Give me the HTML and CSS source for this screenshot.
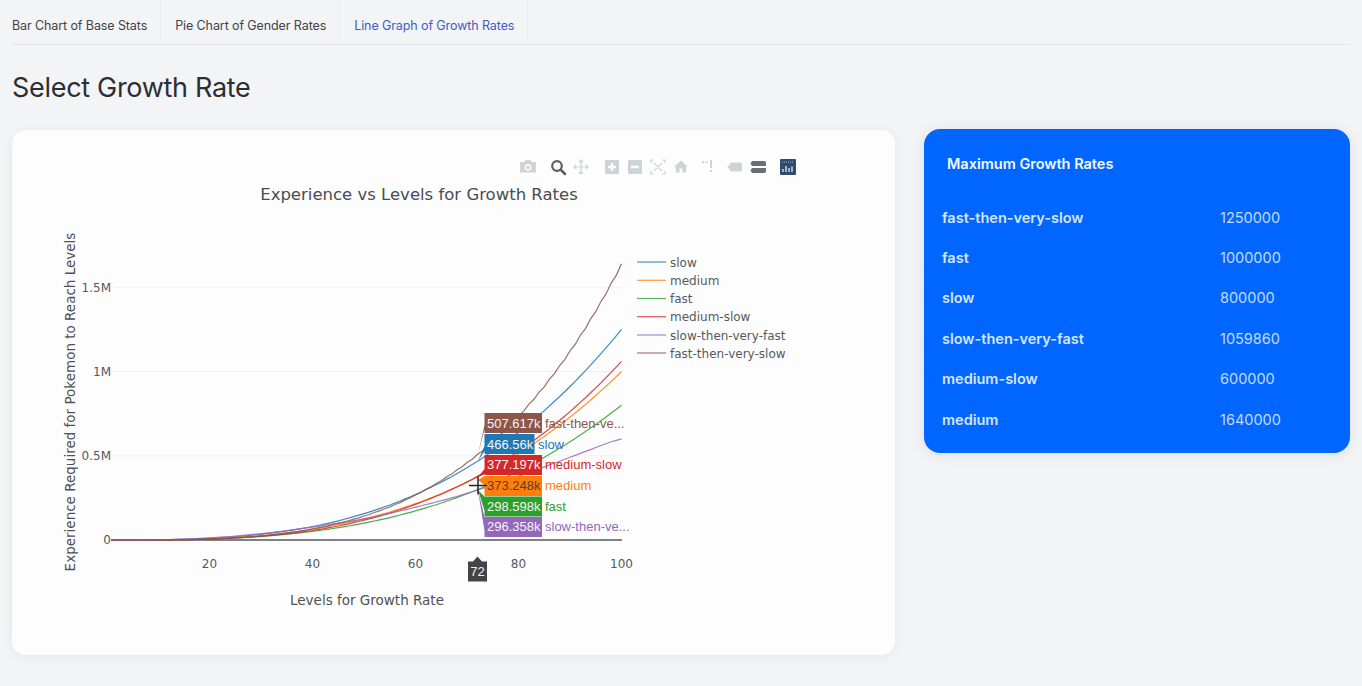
FILE: index.html
```html
<!DOCTYPE html>
<html lang="en">

<head>
  <meta charset="UTF-8" />
  <meta name="viewport" content="width=device-width, initial-scale=1.0" />
  <title>Growth Rates</title>
  <link rel="stylesheet" href="styles.css">
</head>

<body>
  <nav class="tabs">
    <a class="tab">Bar Chart of Base Stats</a>
    <a class="tab">Pie Chart of Gender Rates</a>
    <a class="tab active">Line Graph of Growth Rates</a>
  </nav>

  <h1 class="page-title">Select Growth Rate</h1>

  <main class="content">
    <section class="chart-card">
      <svg class="chart" viewBox="12 130 883 525" width="883" height="525">
        <!-- modebar -->
        <g class="modebar">
          <path class="mb-light" transform="translate(528 167)" d="M-8 -5h4l1.500 -2h5l1.500 2h4v10.500h-16zM0 -3a3.500 3.500 0 1 0 .01 0zM0 -1.300a1.800 1.800 0 1 1 -.01 0z" fill-rule="evenodd" />
          <g transform="translate(558 167)">
            <circle class="mb-ring-dark" cx="-1" cy="-1" r="4.800" />
            <path class="mb-stroke-dark" d="M3 3l4 4" />
          </g>
          <path class="mb-thin" transform="translate(581 167)" d="M0 -7v14M-7 0h14M-2 -5l2 -2 2 2M-2 5l2 2 2 -2M-5 -2l-2 2 2 2M5 -2l2 2 -2 2" />
          <path class="mb-light" transform="translate(612 167)" fill-rule="evenodd" d="M-6 -7h12a1 1 0 0 1 1 1v12a1 1 0 0 1 -1 1h-12a1 1 0 0 1 -1 -1v-12a1 1 0 0 1 1 -1zM-1.200 -4v2.800h-2.800v2.400h2.800v2.800h2.400v-2.800h2.800v-2.400h-2.800v-2.800z" />
          <path class="mb-light" transform="translate(635 167)" fill-rule="evenodd" d="M-6 -7h12a1 1 0 0 1 1 1v12a1 1 0 0 1 -1 1h-12a1 1 0 0 1 -1 -1v-12a1 1 0 0 1 1 -1zM-4 -1.200v2.400h8v-2.400z" />
          <path class="mb-thin" transform="translate(658 167)" d="M-7 -4v-3h3M4 -7h3v3M7 4v3h-3M-4 7h-3v-3M-4 -4l8 8M4 -4l-8 8" />
          <path class="mb-light" transform="translate(681 167)" d="M0 -6.500l7 6.500h-2v5.500h-3.500v-4h-3v4h-3.500v-5.500h-2z" />
          <g class="mb-light" transform="translate(709 167)">
            <rect x="1" y="-7" width="2" height="8" />
            <rect x="1" y="3" width="2" height="2" />
            <rect x="-7" y="-6" width="2" height="2" />
            <rect x="-3.500" y="-6" width="2" height="2" />
          </g>
          <path class="mb-light" transform="translate(735 167)" d="M-4 -4.500h9a2 2 0 0 1 2 2v5a2 2 0 0 1 -2 2h-9l-3.500 -4.500z" />
          <g class="mb-dark" transform="translate(758 167)">
            <path d="M-6 -6h12a2 2 0 0 1 2 2v3h-14l-1.500 -2.500z" />
            <path d="M-6 1h14v3a2 2 0 0 1 -2 2h-12l-1.500 -2.500z" />
          </g>
          <g transform="translate(788 167)">
            <rect class="logo-bg" x="-8" y="-8" width="16" height="16" rx="1" />
            <path class="logo-bars" d="M-5 5v-3M-2 5v-6M1 5v-4M4 5v-5.500" />
            <path class="logo-dots" d="M-6 -5h12" />
          </g>
        </g>

        <text class="plot-title" x="419" y="200" text-anchor="middle">Experience vs Levels for Growth Rates</text>

        <!-- grid -->
        <path class="grid" d="M113 455.800H622M113 371.500H622M113 287.300H622" />

        <g class="tick" text-anchor="end">
          <text x="111" y="291.500">1.5M</text>
          <text x="111" y="375.500">1M</text>
          <text x="111" y="460">0.5M</text>
          <text x="111" y="544">0</text>
        </g>
        <g class="tick" text-anchor="middle">
          <text x="209.500" y="568">20</text>
          <text x="312.500" y="568">40</text>
          <text x="415.500" y="568">60</text>
          <text x="518.500" y="568">80</text>
          <text x="621.500" y="568">100</text>
        </g>

        <text class="axis-title" x="367" y="605" text-anchor="middle">Levels for Growth Rate</text>
        <text class="axis-title" transform="translate(75 402) rotate(-90)" text-anchor="middle">Experience Required for Pokemon to Reach Levels</text>

        <path class="zero-line" d="M111 540H622" />
        <g id="curves" class="curves"></g>

        <!-- legend -->
        <g class="legend">
          <path stroke="#1f77b4" d="M637 262h29" /><text x="670" y="266.500">slow</text>
          <path stroke="#ff7f0e" d="M637 280.300h29" /><text x="670" y="284.800">medium</text>
          <path stroke="#2ca02c" d="M637 298.500h29" /><text x="670" y="303">fast</text>
          <path stroke="#d62728" d="M637 316.700h29" /><text x="670" y="321.200">medium-slow</text>
          <path stroke="#9467bd" d="M637 335h29" /><text x="670" y="339.500">slow-then-very-fast</text>
          <path stroke="#8c564b" d="M637 353h29" /><text x="670" y="357.500">fast-then-very-slow</text>
        </g>

        <!-- hover labels at level 72 -->
        <g class="hover">
          <path fill="#8c564b" d="M478 455l6.500 -30v-12h57.500v20h-57.500v-4z" />
          <text class="hover-value" x="487" y="428">507.617k</text>
          <text class="hover-name" fill="#8c564b" x="545" y="428">fast-then-ve...</text>

          <path fill="#1f77b4" d="M478 461l6.500 -15v-12h50v20h-50v-3z" />
          <text class="hover-value" x="487" y="449">466.56k</text>
          <text class="hover-name" fill="#1f77b4" x="538" y="449">slow</text>

          <path fill="#d62728" d="M478 477l6.500 -8v-14h57.500v20h-57.500v-1z" />
          <text class="hover-value" x="487" y="469">377.197k</text>
          <text class="hover-name" fill="#d62728" x="545" y="469">medium-slow</text>

          <path fill="#ff7f0e" d="M478 480l6.500 -4h57.500v20h-57.500v-11z" />
          <text class="hover-value dark" x="487" y="490">373.248k</text>
          <text class="hover-name" fill="#ff7f0e" x="545" y="490">medium</text>

          <path fill="#2ca02c" d="M478 490l6.500 6.500h57.500v20h-57.500v-6z" />
          <text class="hover-value" x="487" y="511">298.598k</text>
          <text class="hover-name" fill="#2ca02c" x="545" y="511">fast</text>

          <path fill="#9467bd" d="M478 490l6.500 27h57.500v20h-57.500v-6z" />
          <text class="hover-value" x="487" y="531">296.358k</text>
          <text class="hover-name" fill="#9467bd" x="545" y="531">slow-then-ve...</text>

          <path class="x-hover" d="M468 561.500h5l4.500 -5 4.500 5h5v20h-19z" />
          <text class="x-hover-text" x="477.500" y="576" text-anchor="middle">72</text>
          <path class="cursor" d="M478 476.500v18M469 485.500h18" />
        </g>
      </svg>
    </section>

    <aside class="max-card">
      <h2 class="max-title">Maximum Growth Rates</h2>
      <ul class="max-list">
        <li class="max-row"><span class="max-name">fast-then-very-slow</span><span class="max-value">1250000</span></li>
        <li class="max-row"><span class="max-name">fast</span><span class="max-value">1000000</span></li>
        <li class="max-row"><span class="max-name">slow</span><span class="max-value">800000</span></li>
        <li class="max-row"><span class="max-name">slow-then-very-fast</span><span class="max-value">1059860</span></li>
        <li class="max-row"><span class="max-name">medium-slow</span><span class="max-value">600000</span></li>
        <li class="max-row"><span class="max-name">medium</span><span class="max-value">1640000</span></li>
      </ul>
    </aside>
  </main>

  <script src="chart.js"></script>
</body>

</html>
```

FILE: styles.css
```css
* {
  box-sizing: border-box;
}

html,
body {
  height: 100%;
}

body {
  font-family: Inter, "Noto Sans", Arial, sans-serif;
  background: #f3f4f6;
  color: #2b2f33;
  margin: 0;
  padding: 0 12px;
  overflow: hidden;
}

.tabs {
  display: flex;
  height: 45px;
  border-bottom: 1px solid #e4e6e9;
}

.tab {
  display: flex;
  align-items: center;
  padding: 6px 13px 0 14px;
  font-size: 12.500px;
  letter-spacing: -0.1px;
  color: #3f4347;
  border-right: 1px solid #eaecee;
}

.tab:first-child {
  padding-left: 0;
}

.tab.active {
  color: #3d5cc4;
}

.page-title {
  font-size: 27px;
  font-weight: 400;
  letter-spacing: -0.3px;
  line-height: 34px;
  margin: 26px 0 25px;
}

.content {
  display: flex;
  align-items: flex-start;
  gap: 29px;
}

.chart-card {
  width: 883px;
  height: 525px;
  background: #fdfdfe;
  border-radius: 14px;
  box-shadow: 0 2px 14px rgba(30, 40, 60, 0.06);
}

.chart {
  display: block;
}

.plot-title {
  font-family: "DejaVu Sans", sans-serif;
  font-size: 16.500px;
  fill: #484c50;
}

.axis-title {
  font-family: "DejaVu Sans", sans-serif;
  font-size: 13.500px;
  fill: #4d5155;
}

.tick text {
  font-family: "DejaVu Sans", sans-serif;
  font-size: 12px;
  fill: #55595d;
}

.grid {
  stroke: #eef0f4;
  fill: none;
}

.zero-line {
  stroke: #55585b;
  stroke-width: 1.500;
  fill: none;
}

.curves path {
  fill: none;
  stroke-width: 1.200;
  opacity: 0.85;
}

.legend path {
  fill: none;
  stroke-width: 1.200;
  opacity: 0.8;
}

.legend text {
  font-family: "DejaVu Sans", sans-serif;
  font-size: 12px;
  fill: #55595d;
}

.hover-value {
  font-family: "Liberation Sans", Arial, sans-serif;
  font-size: 13px;
  fill: #f4f4f4;
}

.hover-value.dark {
  fill: #5a3c20;
}

.hover-name {
  font-family: "Liberation Sans", Arial, sans-serif;
  font-size: 13px;
}

.x-hover {
  fill: #444444;
}

.x-hover-text {
  font-family: "Liberation Sans", Arial, sans-serif;
  font-size: 13px;
  fill: #f0f0f0;
}

.cursor {
  stroke: #222222;
  stroke-width: 1.500;
  fill: none;
}

.mb-light {
  fill: #cfd3d6;
}

.mb-dark {
  fill: #66706e;
}

.mb-ring-dark {
  fill: none;
  stroke: #5b6163;
  stroke-width: 2.200;
}

.mb-stroke-dark {
  stroke: #5b6163;
  stroke-width: 2.500;
  stroke-linecap: round;
}

.mb-thin {
  fill: none;
  stroke: #cfd3d6;
  stroke-width: 1.200;
}

.logo-bg {
  fill: #2f4b6e;
}

.logo-bars {
  stroke: #c9d3df;
  stroke-width: 1.500;
}

.logo-dots {
  stroke: #9fb0c4;
  stroke-width: 1;
  stroke-dasharray: 1 1;
}

.max-card {
  width: 426px;
  height: 324px;
  margin-top: -1px;
  padding: 25px 18px 0;
  background: #0066ff;
  border-radius: 16px;
  box-shadow: 0 2px 14px rgba(30, 40, 60, 0.1);
}

.max-title {
  font-size: 14.500px;
  font-weight: 600;
  line-height: 20px;
  color: #f4f8ff;
  margin: 0 0 23px 5px;
}

.max-list {
  list-style: none;
  margin: 0;
  padding: 0;
}

.max-row {
  display: flex;
  align-items: center;
  height: 40.400px;
  font-size: 14.500px;
}

.max-name {
  width: 278px;
  font-weight: 600;
  color: #d5e5ff;
}

.max-value {
  font-weight: 400;
  color: #c4dbff;
}
```

FILE: chart.js
```js
// same formulas the games use for experience per level
function erratic(n) {
  if (n < 50) return n * n * n * (100 - n) / 50;
  if (n < 68) return n * n * n * (150 - n) / 100;
  if (n < 98) return n * n * n * Math.floor((1911 - 10 * n) / 3) / 500;
  return n * n * n * (160 - n) / 100;
}

function fluctuating(n) {
  if (n < 15) return n * n * n * (Math.floor((n + 1) / 3) + 24) / 50;
  if (n < 36) return n * n * n * (n + 14) / 50;
  return n * n * n * (Math.floor(n / 2) + 32) / 50;
}

const series = [
  { color: '#1f77b4', fn: n => 1.25 * n * n * n },
  { color: '#ff7f0e', fn: n => n * n * n },
  { color: '#2ca02c', fn: n => 0.8 * n * n * n },
  { color: '#d62728', fn: n => 1.2 * n * n * n - 15 * n * n + 100 * n - 140 },
  { color: '#9467bd', fn: erratic },
  { color: '#8c564b', fn: fluctuating }
];

const group = document.getElementById('curves');

series.forEach(s => {
  let d = '';
  for (let n = 1; n <= 100; n++) {
    const x = 209.5 + (n - 20) * 5.15;
    const y = 540 - Math.max(s.fn(n), 0) * 168.5 / 1000000;
    d += (n === 1 ? 'M' : 'L') + x.toFixed(1) + ' ' + y.toFixed(1);
  }
  const path = document.createElementNS('http://www.w3.org/2000/svg', 'path');
  path.setAttribute('d', d);
  path.setAttribute('stroke', s.color);
  group.appendChild(path);
});
```
